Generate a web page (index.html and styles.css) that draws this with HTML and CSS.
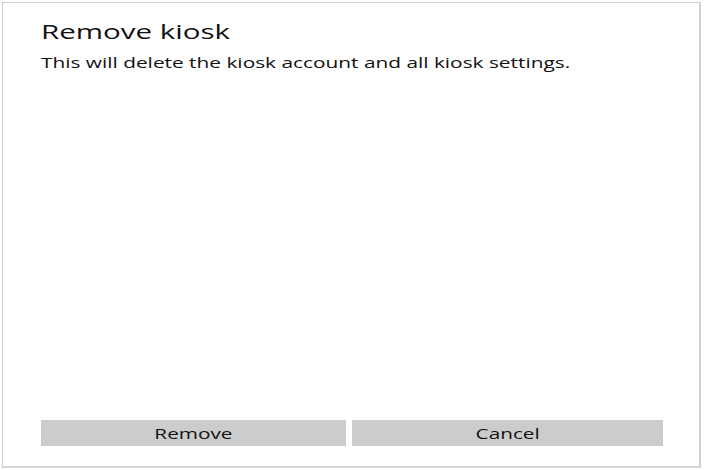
FILE: index.html
```html
<!DOCTYPE html>
<html>
<head>
<meta charset="utf-8">
<link rel="stylesheet" href="styles.css">
</head>
<body>
<div class="dialog">
  <div class="content">
    <h1 class="title"><span class="wide">Remove kiosk</span></h1>
    <p class="message"><span class="wide wide-body">This will delete the kiosk account and all kiosk settings.</span></p>
  </div>
  <div class="buttons">
    <button class="btn btn-primary"><span class="wide-center">Remove</span></button>
    <button class="btn btn-secondary"><span class="wide-center">Cancel</span></button>
  </div>
</div>
</body>
</html>
```
FILE: styles.css
```css
html, body {
  margin: 0;
  padding: 0;
  background: #ffffff;
}
body {
  width: 712px;
  height: 470px;
  padding: 2px 0 0 2px;
  box-sizing: border-box;
  font-family: "Open Sans", "Noto Sans", sans-serif;
  color: #111;
}
.dialog {
  width: 699px;
  height: 466px;
  box-sizing: border-box;
  border: 1px solid #d0d0d0;
  border-right: 2px solid #d0d0d0;
  border-bottom: 2px solid #d6d6d6;
  display: flex;
  flex-direction: column;
  padding: 0 36px 20px 38px;
}
.content {
  flex: 1;
}
.wide {
  display: inline-block;
  transform: scaleX(1.475);
  transform-origin: 0 50%;
  white-space: nowrap;
}
.wide-body {
  transform: scaleX(1.488);
}
.wide-center {
  display: inline-block;
  transform: scaleX(1.48);
  transform-origin: 50% 50%;
  white-space: nowrap;
}
.title {
  margin: 15px 0 0 0;
  font-size: 20px;
  font-weight: 400;
  line-height: 28px;
}
.message {
  margin: 7px 0 0 0;
  font-size: 14px;
  line-height: 20px;
}
.buttons {
  display: flex;
  gap: 6px;
}
.btn {
  height: 26px;
  border: none;
  background: #cccccc;
  font-family: inherit;
  font-size: 14px;
  color: #111;
  padding: 0;
}
.btn-primary {
  width: 305px;
}
.btn-secondary {
  width: 312px;
}
```
